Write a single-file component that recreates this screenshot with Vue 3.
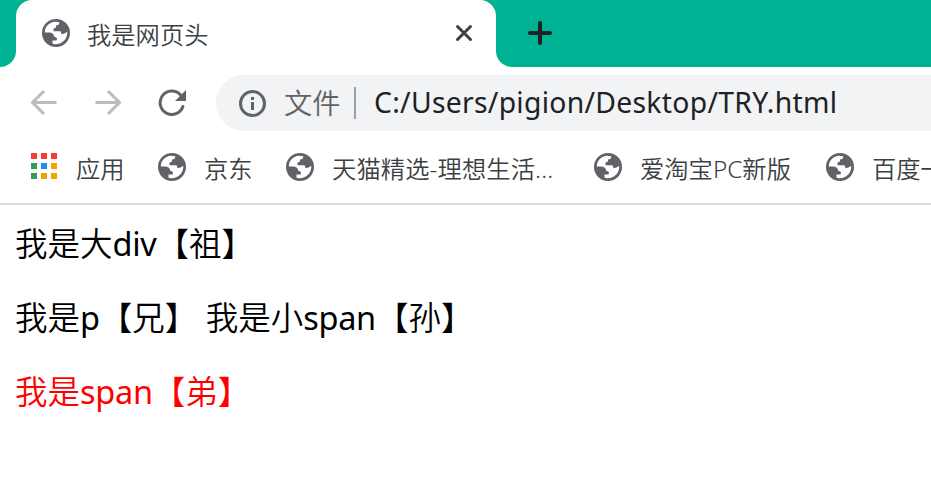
<script setup>
const globe = 'M14 0a14 14 0 1 0 0 28a14 14 0 0 0 0-28zM2.8 13.5C2.8 7.5 7.5 3 13 2.7L17.3 3.2C17.5 5.5 16 6.3 14 6.5L13.8 8.8L11.5 9.5V12.2H18.5L19.5 15C22 15.3 23.5 14 25.2 12.8C25.8 19.5 20.5 25.4 13.2 25.3L10.5 24.8V21.5H14.2C15.5 20.5 15.2 18.8 13.8 18.2L12.2 17.8C12 14.8 9.8 13.5 7 13.5z'
const bookmarks = [
  { cls: 'short', text: '京东' },
  { cls: 'long', text: '天猫精选-理想生活...' },
  { cls: 'medium', text: '爱淘宝PC新版' },
  { cls: 'last', text: '百度一' },
]
const dots = ['r', 'r', 'r', 'g', 'b', 'y', 'g', 'y', 'y']
</script>

<template>
  <div class="browser">
    <header class="tabs">
      <div class="edge left"></div>
      <div class="tab">
        <svg class="globe" viewBox="0 0 28 28"><path :d="globe" fill-rule="evenodd" /></svg>
        <span class="title">我是网页头</span>
        <svg class="close" viewBox="0 0 18 18"><path d="M2.5 2.5l13 13M15.5 2.5l-13 13" /></svg>
      </div>
      <div class="edge right">
        <svg class="plus" viewBox="0 0 24 24"><path d="M12 2v20M2 12h20" /></svg>
      </div>
    </header>

    <nav class="toolbar">
      <svg class="arrow" viewBox="0 0 28 28"><path d="M26.5 13.5H3M14 2L2.5 13.5L14 25" /></svg>
      <svg class="arrow" viewBox="0 0 28 28"><path d="M1.5 13.5H25M14 2L25.5 13.5L14 25" /></svg>
      <svg class="reload" viewBox="0 0 28 28">
        <path class="ring" d="M24.9 17.5A11.7 11.7 0 1 1 22.3 5.7" />
        <path class="tip" d="M28 1V12H17z" />
      </svg>
      <div class="address">
        <svg class="info" viewBox="0 0 28 28">
          <circle cx="14.5" cy="14.5" r="12" />
          <path d="M13 8h3v3h-3zM13 13h3v8h-3z" />
        </svg>
        <span class="scheme">文件</span>
        <span class="divider"></span>
        <span class="url">C:/Users/pigion/Desktop/TRY.html</span>
      </div>
    </nav>

    <nav class="bookmarks">
      <div class="apps"><i v-for="(d, i) in dots" :key="i" :class="d"></i></div>
      <span class="apps-label">应用</span>
      <div v-for="b in bookmarks" :key="b.text" class="bookmark" :class="b.cls">
        <svg class="globe" viewBox="0 0 28 28"><path :d="globe" fill-rule="evenodd" /></svg>
        <span class="label">{{ b.text }}</span>
      </div>
    </nav>

    <main class="page">
      <div>我是大<span class="latin">div</span>【祖】</div>
      <p>我是<span class="latin">p</span>【兄】 <span>我是小<span class="latin">span</span>【孙】</span></p>
      <span class="red">我是<span class="latin">span</span>【弟】</span>
    </main>
  </div>
</template>

<style>
body { margin: 0; background: #fff; }
</style>

<style scoped>
.browser {
  width: 931px;
  height: 499px;
  overflow: hidden;
  background: #fff;
  font-family: "Noto Sans", "Noto Sans CJK SC", sans-serif;
  font-weight: 350;
  color: #3c4043;
}
.browser svg { flex: none; display: block; }
.tabs { display: flex; height: 67px; background: linear-gradient(#00b294, #00b294) 0 0 / 100% 16px no-repeat; }
.edge { background: #00b294; }
.left { width: 16px; border-bottom-right-radius: 16px; }
.right { flex: 1; border-bottom-left-radius: 16px; padding: 21px 0 0 32px; box-sizing: border-box; }
.tab {
  width: 480px;
  box-sizing: border-box;
  padding: 0 23px 1px 26px;
  display: flex;
  align-items: center;
  background: #fff;
  border-radius: 16px 16px 0 0;
}
.globe { width: 28px; height: 28px; fill: #5f6368; }
.title { flex: 1; margin-left: 17px; padding-top: 3px; font-size: 24.3px; line-height: 32px; }
.close { width: 18px; height: 18px; stroke: #3c4043; stroke-width: 3; stroke-linecap: round; }
.plus { width: 24px; height: 24px; stroke: #202124; stroke-width: 4; stroke-linecap: round; }

.toolbar { display: flex; align-items: center; height: 72px; padding-left: 30px; }
.arrow { width: 28px; height: 28px; margin-right: 36px; fill: none; stroke: #babcbe; stroke-width: 3; }
.reload { width: 28px; height: 28px; margin-right: 30px; fill: #5f6368; }
.ring { fill: none; stroke: #5f6368; stroke-width: 3; stroke-linecap: round; }
.address {
  flex: 1;
  display: flex;
  align-items: center;
  height: 56px;
  padding-left: 22px;
  background: #f1f3f4;
  border-radius: 28px 0 0 28px;
}
.info { width: 28px; height: 28px; fill: #5f6368; }
.info circle { fill: none; stroke: #5f6368; stroke-width: 3; }
.scheme { margin-left: 18px; width: 56px; font-size: 28.3px; line-height: 40px; color: #5f6368; white-space: nowrap; }
.divider { width: 2px; height: 32px; margin: 0 18px 0 14px; background: #9aa0a6; }
.url {
  padding-bottom: 2px;
  font-size: 28.3px;
  line-height: 40px;
  font-weight: 400;
  letter-spacing: 0.3px;
  color: #202124;
  white-space: nowrap;
}

.bookmarks {
  display: flex;
  align-items: center;
  height: 56px;
  padding: 0 0 8px 31px;
  font-size: 24.3px;
  line-height: 32px;
  border-bottom: 2px solid #dadce0;
  white-space: nowrap;
  overflow: hidden;
}
.apps { display: grid; grid-template-columns: repeat(3, 6px); grid-auto-rows: 6px; gap: 4px; margin-bottom: 2px; }
.r { background: #f93a33; }
.g { background: #2f9e58; }
.b { background: #1f8bf8; }
.y { background: #f2a300; }
.apps-label { width: 48px; margin: 0 34px 0 19px; padding-top: 3px; }
.label { padding-top: 3px; }
.long .label { letter-spacing: 0.1px; }
.bookmark { display: flex; align-items: center; gap: 18px; flex: none; }
.short { width: 128px; }
.long { width: 308px; }
.medium { width: 232px; }
.page { padding: 18px 15px 0; font-size: 32.5px; line-height: 42px; color: #000; }
.page p { margin: 32px 0; }
.latin { font-weight: 400; letter-spacing: -0.3px; }
.page .red { color: #f00; }
</style>
